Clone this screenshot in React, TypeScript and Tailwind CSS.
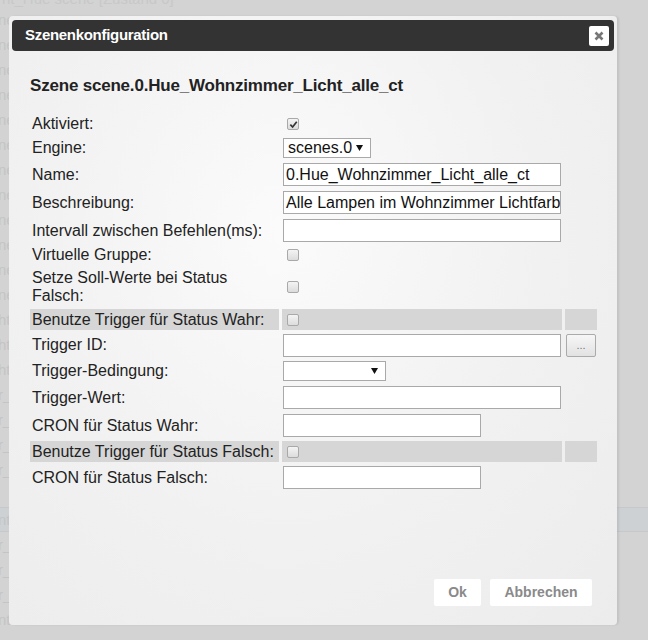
import React from "react";

const bgRows: { t: string; blue?: boolean }[] = [
  ...Array(12).fill({ t: "ne" }),
  { t: "ht" }, { t: "ht" }, { t: "ht" },
  { t: "r_" }, { t: "r_" }, { t: "r_" }, { t: "r_" },
  { t: "" }, { t: "nt", blue: true },
  { t: "r_" }, { t: "r_" }, { t: "r_" }, { t: "nt" },
];

function Checkbox({ checked }: { checked?: boolean }) {
  return (
    <div className="ml-[5px] w-[12px] h-[12px] rounded-[2px] border border-[#a9a9a9] bg-gradient-to-b from-[#f4f4f4] to-[#dcdcdc] flex items-center justify-center">
      {checked && (
        <svg width="9" height="9" viewBox="0 0 10 10">
          <path d="M1.5 5.2 L4 7.8 L8.6 2" fill="none" stroke="#333" strokeWidth="1.9" />
        </svg>
      )}
    </div>
  );
}

function TextInput({ w, value }: { w: string; value?: string }) {
  return (
    <div className={`${w} h-[23px] ml-px bg-white border border-[#a9a9a9] px-[2px] flex items-center overflow-hidden whitespace-nowrap text-[16px] text-[#111] leading-none`}>
      {value}
    </div>
  );
}

function Select({ w, value }: { w: string; value?: string }) {
  return (
    <div className={`${w} h-[20px] ml-px bg-white border border-[#a9a9a9] pl-[4px] pr-[7px] flex items-center justify-between text-[16px] text-[#111] leading-none`}>
      <span>{value}</span>
      <svg width="7" height="6" viewBox="0 0 7 6"><path d="M0 0 H7 L3.5 6 Z" fill="#111" /></svg>
    </div>
  );
}

function Row({ label, h, children, gray, third }: { label: React.ReactNode; h: string; children?: React.ReactNode; gray?: boolean; third?: React.ReactNode }) {
  return (
    <div className={`flex gap-[3px] ${h}`}>
      <div className={`w-[249px] shrink-0 pl-[2px] flex items-center text-[16px] leading-[18px] text-[#222] ${gray ? "bg-[#d6d6d6]" : ""}`}>{label}</div>
      <div className={`w-[280px] shrink-0 flex items-center ${gray ? "bg-[#d6d6d6]" : ""}`}>{children}</div>
      <div className={`w-[32px] shrink-0 flex items-center ${gray ? "bg-[#d6d6d6]" : ""}`}>{third}</div>
    </div>
  );
}

export default function App() {
  return (
    <div className="relative w-[648px] h-[640px] overflow-hidden bg-[#d3d3d3] font-['Liberation_Sans',Arial,sans-serif]">
      {/* background page */}
      <div className="text-[15px] text-[#c4c4c4] leading-none">
        <div className="h-[8px] -mt-[9px] pl-[2px] whitespace-nowrap text-[#c8c8c8] font-['Liberation_Sans',Arial,sans-serif]">ht_Hue scene [Zustand 0]</div>
        <div className="h-[8px]" />
        {bgRows.map((r, i) => (
          <div key={i} className={`h-[25px] flex items-center ${r.blue ? "bg-[#cdd1d4] border-y border-[#c6c8ca]" : ""}`}>
            <span className="-ml-[2px]">{r.t}</span>
          </div>
        ))}
      </div>

      {/* dialog */}
      <div className="absolute left-[9px] top-[16px] w-[608px] h-[609px] rounded-[4px] bg-[radial-gradient(ellipse_at_45%_35%,#fbfbfb_0%,#f1f1f1_55%,#ececec_100%)] shadow-[2px_0_2px_rgba(0,0,0,0.08)] pt-[4px] px-[3px] flex flex-col">
        <div className="h-[31px] rounded-[4px] bg-[#333333] flex items-center justify-between pl-[13px] pr-[5px]">
          <span className="text-white font-bold text-[15px] tracking-[-0.3px]">Szenenkonfiguration</span>
          <div className="w-[20px] h-[20px] bg-white rounded-[2px] flex items-center justify-center">
            <svg width="10" height="10" viewBox="0 0 10 10">
              <path d="M1.5 1.5 L8.5 8.5 M8.5 1.5 L1.5 8.5" stroke="#777" strokeWidth="2.6" />
            </svg>
          </div>
        </div>

        <div className="pl-[18px]">
          <div className="mt-[25px] text-[17px] font-bold text-[#222] leading-[20px] tracking-[-0.2px]">Szene scene.0.Hue_Wohnzimmer_Licht_alle_ct</div>

          <div className="mt-[18px] flex flex-col gap-[3px]">
            <Row label="Aktiviert:" h="h-[20px]"><Checkbox checked /></Row>
            <Row label="Engine:" h="h-[22px]"><Select w="w-[88px]" value="scenes.0" /></Row>
            <Row label="Name:" h="h-[25px]"><TextInput w="w-[278px]" value="0.Hue_Wohnzimmer_Licht_alle_ct" /></Row>
            <Row label="Beschreibung:" h="h-[25px]"><TextInput w="w-[278px]" value="Alle Lampen im Wohnzimmer Lichtfarbe" /></Row>
            <Row label="Intervall zwischen Befehlen(ms):" h="h-[25px]"><TextInput w="w-[278px]" /></Row>
            <Row label="Virtuelle Gruppe:" h="h-[18px]"><Checkbox /></Row>
            <Row label={<span>Setze Soll-Werte bei Status<br />Falsch:</span>} h="h-[39px]"><Checkbox /></Row>
            <Row label="Benutze Trigger für Status Wahr:" h="h-[21px]" gray><Checkbox /></Row>
            <Row
              label="Trigger ID:"
              h="h-[24px]"
              third={
                <div className="ml-px w-[30px] h-[23px] border border-[#aaaaaa] rounded-[2px] bg-gradient-to-b from-[#f6f6f6] to-[#e2e2e2] flex items-center justify-center text-[11px] text-[#777] leading-none">...</div>
              }
            >
              <TextInput w="w-[278px]" />
            </Row>
            <Row label="Trigger-Bedingung:" h="h-[22px]"><Select w="w-[103px]" value="" /></Row>
            <Row label="Trigger-Wert:" h="h-[25px]"><TextInput w="w-[278px]" /></Row>
            <Row label="CRON für Status Wahr:" h="h-[25px]"><TextInput w="w-[198px]" /></Row>
            <Row label="Benutze Trigger für Status Falsch:" h="h-[21px]" gray><Checkbox /></Row>
            <Row label="CRON für Status Falsch:" h="h-[25px]"><TextInput w="w-[198px]" /></Row>
          </div>
        </div>

        <div className="flex-1" />
        <div className="flex justify-end gap-[9px] pr-[22px] pb-[19px]">
          <div className="w-[47px] h-[27px] bg-white rounded-[2px] flex items-center justify-center text-[14px] font-bold text-[#8a8a8a]">Ok</div>
          <div className="w-[102px] h-[27px] bg-white rounded-[2px] flex items-center justify-center text-[14px] font-bold text-[#8a8a8a]">Abbrechen</div>
        </div>
      </div>
    </div>
  );
}
